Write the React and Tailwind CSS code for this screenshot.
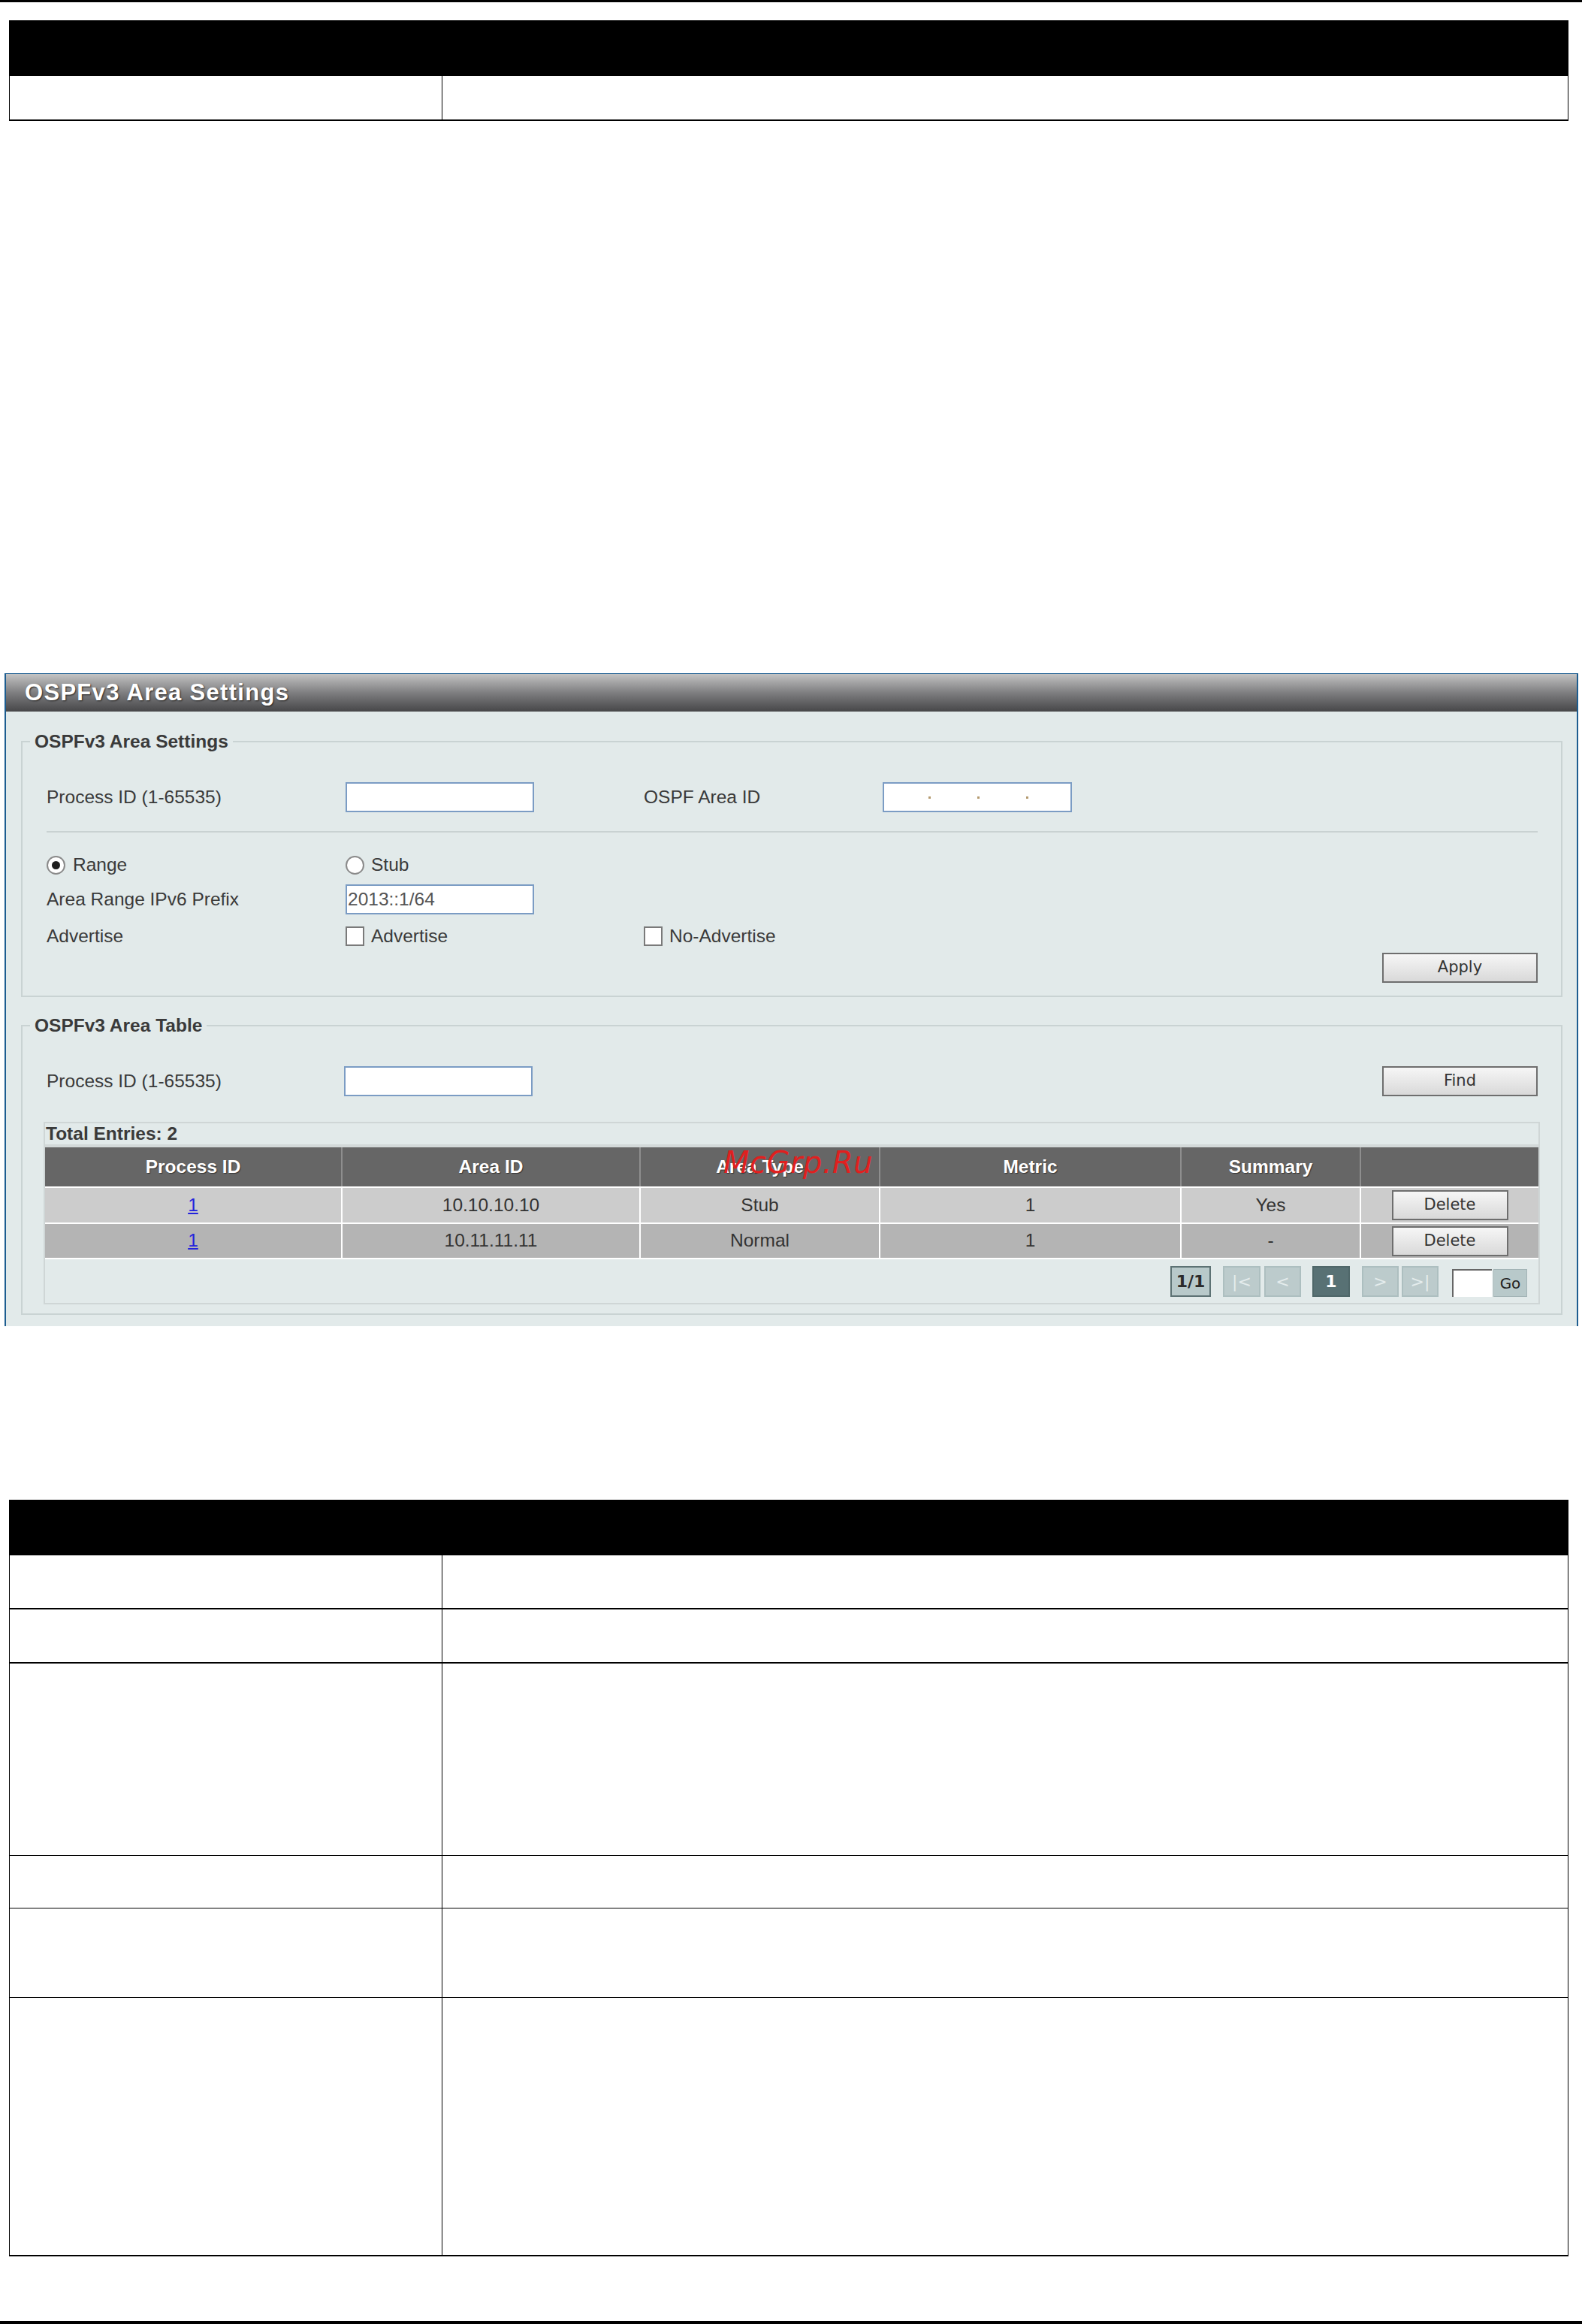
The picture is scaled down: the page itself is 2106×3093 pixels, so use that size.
import React from "react";

const docRowsTop = ["h-[60px] border-b-2"];
const docRowsBottom = [
  "h-[72px] border-b-2",
  "h-[72px] border-b-2",
  "h-[256px] border-b",
  "h-[70px] border-b",
  "h-[119px] border-b",
  "h-[344px] border-b-2",
];

const DocTable = ({ rows }) => (
  <div className="ml-[12px] w-[2076px]">
    <div className="h-[74px] bg-black" />
    {rows.map((cls, i) => (
      <div key={i} className={`flex border-x border-black ${cls}`}>
        <div className="w-[576px] border-r border-black" />
        <div className="flex-1" />
      </div>
    ))}
  </div>
);

const Fieldset = ({ legend, className, children }) => (
  <div className={`relative ml-[20px] mr-[19px] border-2 border-[#c9d3d3] ${className}`}>
    <div className="absolute -top-[15px] left-[10px] bg-[#e2eaea] px-[6px] text-[24.5px] font-bold leading-[28px] text-[#3a3a3a]">
      {legend}
    </div>
    {children}
  </div>
);

const TextBox = ({ className = "", children }) => (
  <div
    className={`h-[40px] border-2 border-[#7b9cc4] bg-white ${className}`}
  >
    {children}
  </div>
);

const Button = ({ label, className = "" }) => (
  <button
    type="button"
    className={`flex items-center justify-center border-2 border-[#6e6e6e] bg-gradient-to-b from-[#f6f6f6] to-[#d9d9d9] font-['DejaVu_Sans',sans-serif] text-[21px] text-[#333] ${className}`}
  >
    {label}
  </button>
);

const Radio = ({ checked }) => (
  <span className="flex h-[25px] w-[25px] items-center justify-center rounded-full border-2 border-[#8a8a8a] bg-white">
    {checked ? <span className="h-[11px] w-[11px] rounded-full bg-[#1e1e1e]" /> : null}
  </span>
);

const Checkbox = () => (
  <span className="h-[26px] w-[25px] border-2 border-[#7a7a7a] bg-white" />
);

const columns = [
  { label: "Process ID", w: "w-[396px]" },
  { label: "Area ID", w: "w-[397px]" },
  { label: "Area Type", w: "w-[319px]" },
  { label: "Metric", w: "w-[401px]" },
  { label: "Summary", w: "w-[239px]" },
];

const entries = [
  { id: "1", area: "10.10.10.10", type: "Stub", metric: "1", summary: "Yes", bg: "bg-[#cccccc]", h: "h-[46px]" },
  { id: "1", area: "10.11.11.11", type: "Normal", metric: "1", summary: "-", bg: "bg-[#b4b4b4]", h: "h-[45px]" },
];

const PageBtn = ({ children, className = "" }) => (
  <span
    className={`flex h-[41px] items-center justify-center border-2 font-['DejaVu_Sans',sans-serif] text-[22px] ${className}`}
  >
    {children}
  </span>
);

export default function App() {
  return (
    <div className="relative h-[3093px] w-[2106px] overflow-hidden bg-white font-['Liberation_Sans',Arial,sans-serif] text-[24.5px] text-[#3a3a3a]">
      <div className="h-[3px] bg-black" />

      <div className="mt-[24px]">
        <DocTable rows={docRowsTop} />
      </div>

      {/* device panel */}
      <div className="ml-[6px] mt-[735px] w-[2095px] border-x-2 border-t border-[#1d5d90] bg-[#e2eaea] pb-[15px]">
        <div className="flex h-[50px] items-center bg-gradient-to-b from-[#c4c4c4] via-[#7e7e80] to-[#474749] pl-[25px] text-[31px] font-bold tracking-[1.3px] text-white [text-shadow:1px_1px_2px_#222]">
          OSPFv3 Area Settings
        </div>

        <Fieldset legend="OSPFv3 Area Settings" className="mt-[39px] h-[341px]">
          <div className="pl-[32px]">
            <div className="mt-[53px] flex h-[40px] items-center">
              <span className="w-[398px]">Process ID (1-65535)</span>
              <TextBox className="w-[251px]" />
              <span className="ml-[146px] w-[318px]">OSPF Area ID</span>
              <TextBox className="flex w-[252px] items-center gap-[62px] pl-[59px]">
                <span className="h-[3px] w-[3px] bg-[#b49a70]" />
                <span className="h-[3px] w-[3px] bg-[#b49a70]" />
                <span className="h-[3px] w-[3px] bg-[#b49a70]" />
              </TextBox>
            </div>

            <div className="mt-[25px] h-[2px] w-[1985px] bg-[#c9d2d2]" />

            <div className="mt-[29px] flex h-[28px] items-center">
              <span className="flex w-[398px] items-center">
                <Radio checked />
                <span className="ml-[10px]">Range</span>
              </span>
              <span className="flex items-center">
                <Radio />
                <span className="ml-[9px]">Stub</span>
              </span>
            </div>

            <div className="mt-[12px] flex h-[40px] items-center">
              <span className="w-[398px]">Area Range IPv6 Prefix</span>
              <TextBox className="flex w-[251px] items-center pl-[1px] text-[#555]">
                2013::1/64
              </TextBox>
            </div>

            <div className="mt-[15px] flex h-[28px] items-center">
              <span className="w-[398px]">Advertise</span>
              <span className="flex w-[397px] items-center">
                <Checkbox />
                <span className="ml-[9px]">Advertise</span>
              </span>
              <span className="flex items-center">
                <Checkbox />
                <span className="ml-[9px]">No-Advertise</span>
              </span>
            </div>
          </div>

          <div className="mt-[8px] flex justify-end pr-[31px]">
            <Button label="Apply" className="h-[40px] w-[207px]" />
          </div>
        </Fieldset>

        <Fieldset legend="OSPFv3 Area Table" className="mt-[37px] h-[386px]">
          <div className="mt-[53px] flex h-[40px] items-center pl-[32px] pr-[31px]">
            <span className="w-[396px]">Process ID (1-65535)</span>
            <TextBox className="w-[251px]" />
            <span className="flex-1" />
            <Button label="Find" className="h-[40px] w-[207px]" />
          </div>

          <div className="mx-[28px] mt-[34px] h-[243px] border-2 border-[#cfd6d6]">
            <div className="flex h-[28px] items-center pl-[1px] font-bold">Total Entries: 2</div>
            <div className="h-[4px] bg-[#d3d9d9]" />

            <div className="flex flex-col gap-[2px] bg-white pb-[2px]">
              <div className="relative flex h-[52px] bg-[#666666] font-bold text-white [text-shadow:1px_1px_1px_#333]">
                {columns.map((c) => (
                  <div
                    key={c.label}
                    className={`flex items-center justify-center border-r-2 border-[#8e8e8e] ${c.w}`}
                  >
                    {c.label}
                  </div>
                ))}
                <div className="flex-1" />
                <span className="pointer-events-none absolute left-[903px] top-0 font-['DejaVu_Sans',sans-serif] text-[40px] font-normal italic leading-none tracking-[0.5px] text-[#e0201f] [text-shadow:none]">
                  McGrp.Ru
                </span>
              </div>

              {entries.map((e, i) => (
                <div key={i} className={`flex ${e.h} ${e.bg} text-[#333]`}>
                  <div className="flex w-[396px] items-center justify-center border-r-2 border-white">
                    <a href="#" className="text-[#2222dd] underline">
                      {e.id}
                    </a>
                  </div>
                  <div className="flex w-[397px] items-center justify-center border-r-2 border-white">{e.area}</div>
                  <div className="flex w-[319px] items-center justify-center border-r-2 border-white">{e.type}</div>
                  <div className="flex w-[401px] items-center justify-center border-r-2 border-white">{e.metric}</div>
                  <div className="flex w-[239px] items-center justify-center border-r-2 border-white">{e.summary}</div>
                  <div className="flex flex-1 items-center justify-center">
                    <Button label="Delete" className="h-[40px] w-[155px]" />
                  </div>
                </div>
              ))}
            </div>

            <div className="flex h-[58px] items-end justify-end pb-[8px] pr-[15px]">
              <PageBtn className="w-[54px] border-[#5d7274] bg-[#b8c9ca] font-bold text-[#2b2b2b]">1/1</PageBtn>
              <PageBtn className="ml-[16px] w-[50px] border-[#adbfc0] bg-[#bccbcc] text-[#e4ecec]">|&lt;</PageBtn>
              <PageBtn className="ml-[5px] w-[49px] border-[#adbfc0] bg-[#bccbcc] text-[#e4ecec]">&lt;</PageBtn>
              <PageBtn className="ml-[15px] w-[50px] border-[#4f6769] bg-[#587174] font-bold text-white">1</PageBtn>
              <PageBtn className="ml-[16px] w-[49px] border-[#adbfc0] bg-[#bccbcc] text-[#e4ecec]">&gt;</PageBtn>
              <PageBtn className="ml-[4px] w-[49px] border-[#adbfc0] bg-[#bccbcc] text-[#e4ecec]">&gt;|</PageBtn>
              <span className="ml-[18px] h-[37px] w-[53px] border-l-2 border-t-2 border-[#666] bg-white" />
              <span className="ml-[2px] flex h-[37px] w-[45px] items-center justify-center border border-[#a3b4b6] bg-[#b8c9ca] font-['DejaVu_Sans',sans-serif] text-[20px] text-[#222]">
                Go
              </span>
            </div>
          </div>
        </Fieldset>
      </div>

      <div className="mt-[231px]">
        <DocTable rows={docRowsBottom} />
      </div>

      <div className="mt-[86px] h-[4px] bg-black" />
    </div>
  );
}
